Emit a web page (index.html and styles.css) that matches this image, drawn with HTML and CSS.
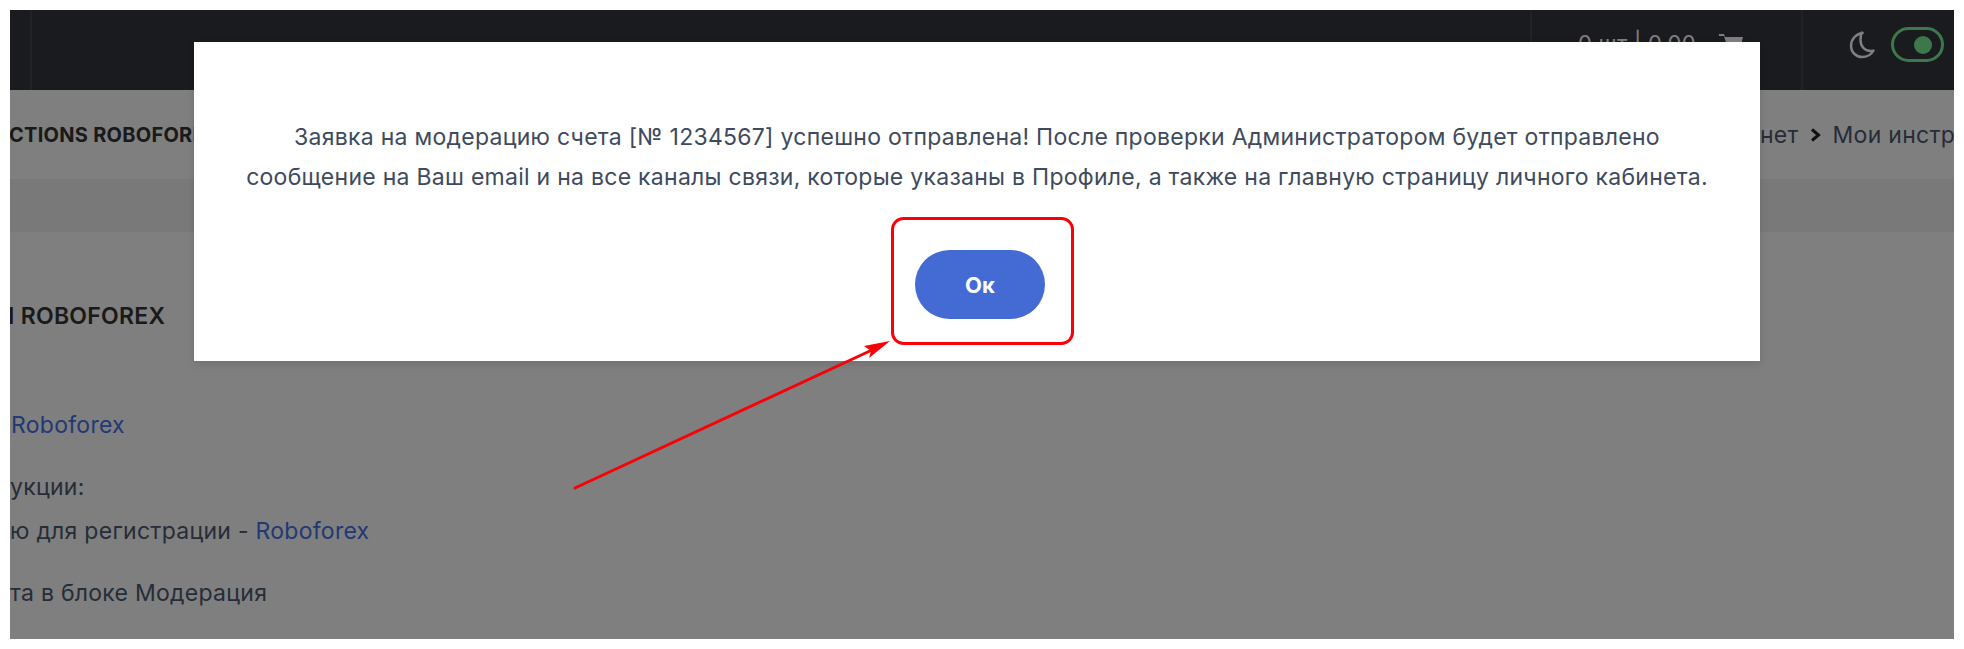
FILE: index.html
```html
<!DOCTYPE html>
<html lang="ru">
<head>
    <meta charset="UTF-8">
    <title>Мои инструкции</title>
    <link rel="stylesheet" href="styles.css">
</head>
<body>
    <div class="page">
        <header class="topbar">
            <div class="topbar-left"></div>
            <div class="topbar-spacer"></div>
            <div class="cart">
                <span>0 шт | 0.00</span>
                <svg class="cart-icon" width="26" height="26" viewBox="0 0 26 26"><path d="M1 3h5l1 3h18l-3 12H10L6 5H1z" fill="#ffffff"/><circle cx="11" cy="22" r="2" fill="#ffffff"/><circle cx="20" cy="22" r="2" fill="#ffffff"/></svg>
            </div>
            <div class="theme">
                <svg class="moon" width="26" height="28" viewBox="0 0 26 28"><path d="M13.5 2C7 3 2 8 2 15c0 6 5 11 11 11 5 0 9-2 11.5-6.5-1 .5-2 .5-3 .5-6 0-10-5-10-11 0-3 .5-6 1.5-7.5z" fill="none" stroke="#ffffff" stroke-width="2.5" stroke-linejoin="round"/></svg>
                <div class="toggle"><span class="knob"></span></div>
            </div>
        </header>
        <div class="titlebar">
            <h1 class="title">CTIONS ROBOFOREX</h1>
            <div class="crumbs">
                <span>нет</span>
                <svg class="chevron" width="12" height="14" viewBox="0 0 12 14"><path d="M2 1.5 8.5 7 2 12.5" fill="none" stroke="#222222" stroke-width="3"/></svg>
                <span>Мои инструкции</span>
            </div>
        </div>
        <div class="band"></div>
        <main class="content">
            <h2 class="heading">I ROBOFOREX</h2>
            <p class="line line-link"><a href="#">Roboforex</a></p>
            <p class="line line-steps">укции:</p>
            <p class="line line-reg">ю для регистрации - <a href="#">Roboforex</a></p>
            <p class="line line-mod">та в блоке Модерация</p>
        </main>

        <div class="overlay">
            <div class="modal">
                <p class="modal-text">Заявка на модерацию счета [№ 1234567] успешно отправлена! После проверки Администратором будет отправлено<br>сообщение на Ваш email и на все каналы связи, которые указаны в Профиле, а также на главную страницу личного кабинета.</p>
                <button class="ok">Ок</button>
            </div>
        </div>
    </div>

    <!-- red marks drawn on top of the screenshot -->
    <svg class="marks" width="1964" height="649" viewBox="0 0 1964 649">
        <rect x="892.5" y="218.5" width="180" height="125" rx="11" fill="none" stroke="#fb0007" stroke-width="3"/>
        <line x1="575" y1="488" x2="872" y2="350" stroke="#fb0007" stroke-width="3" stroke-linecap="round"/>
        <polygon points="890,341 864,346 871,351 869,358" fill="#fb0007"/>
    </svg>
</body>
</html>
```

FILE: styles.css
```css
body {
    margin: 10px;
    background: #ffffff;
    font-family: Inter, "Liberation Sans", sans-serif;
    letter-spacing: 0.27px;
}
.page {
    position: relative;
    height: 629px;
    overflow: hidden;
    background: #ffffff;
    color: #4c5a70;
}
.topbar {
    display: flex;
    height: 80px;
    background: #34363f;
}
.topbar-left {
    width: 20px;
    border-right: 2px solid #42444e;
}
.topbar-spacer {
    flex: 1;
}
.cart {
    display: flex;
    gap: 22px;
    width: 273px;
    padding: 20px 0 0 46px;
    box-sizing: border-box;
    border-left: 2px solid #42444e;
    border-right: 2px solid #42444e;
    color: #ffffff;
    font-size: 22px;
    white-space: nowrap;
}
.cart-icon {
    margin-top: 1px;
}
.theme {
    display: flex;
    gap: 16px;
    width: 151px;
    padding: 21px 0 0 46px;
    box-sizing: border-box;
}
.moon {
    flex-shrink: 0;
}
.toggle {
    display: flex;
    justify-content: flex-end;
    align-items: center;
    width: 53px;
    height: 35px;
    margin-top: -4px;
    padding-right: 9px;
    box-sizing: border-box;
    border: 3px solid #78f094;
    border-radius: 18px;
}
.knob {
    width: 18px;
    height: 18px;
    border-radius: 50%;
    background: #78f094;
}
.titlebar {
    display: flex;
    justify-content: space-between;
    align-items: center;
    height: 89px;
    background: #ffffff;
}
.title {
    margin: 0 0 0 -1px;
    color: #343434;
    font-size: 20px;
    font-weight: 700;
    white-space: nowrap;
}
.crumbs {
    display: flex;
    align-items: center;
    gap: 11px;
    flex-shrink: 0;
    width: 194px;
    white-space: nowrap;
    font-size: 23px;
}
.chevron {
    flex-shrink: 0;
}
.band {
    height: 53px;
    background: #f2f2f2;
}
.content {
    padding-top: 1px;
}
.heading {
    margin: 70px 0 0 -2px;
    color: #343434;
    font-size: 23px;
    font-weight: 600;
    line-height: 26px;
}
.line {
    margin: 0;
    font-size: 23px;
    line-height: 30px;
}
.line a {
    color: #4472e8;
    text-decoration: none;
}
.line-link { margin-top: 81px; padding-left: 1px; }
.line-steps { margin-top: 32px; }
.line-reg { margin-top: 14px; }
.line-mod { margin-top: 32px; }

.overlay {
    position: absolute;
    inset: 0;
    display: flex;
    justify-content: center;
    padding: 32px 10px 0 0;
    background: rgba(0, 0, 0, 0.5);
}
.modal {
    display: flex;
    flex-direction: column;
    align-items: center;
    width: 1566px;
    height: 319px;
    padding-top: 75px;
    box-sizing: border-box;
    background: #ffffff;
    box-shadow: 0 3px 8px rgba(0, 0, 0, 0.12);
}
.modal-text {
    margin: 0;
    color: #3e4a5d;
    font-size: 23px;
    line-height: 40px;
    text-align: center;
}
.ok {
    width: 130px;
    height: 69px;
    margin: 53px 0 0 6px;
    border: none;
    border-radius: 35px;
    background: #446bd4;
    color: #ffffff;
    font-family: inherit;
    font-size: 22px;
    font-weight: 700;
    cursor: pointer;
}
.marks {
    position: absolute;
    top: 0;
    left: 0;
}
```
